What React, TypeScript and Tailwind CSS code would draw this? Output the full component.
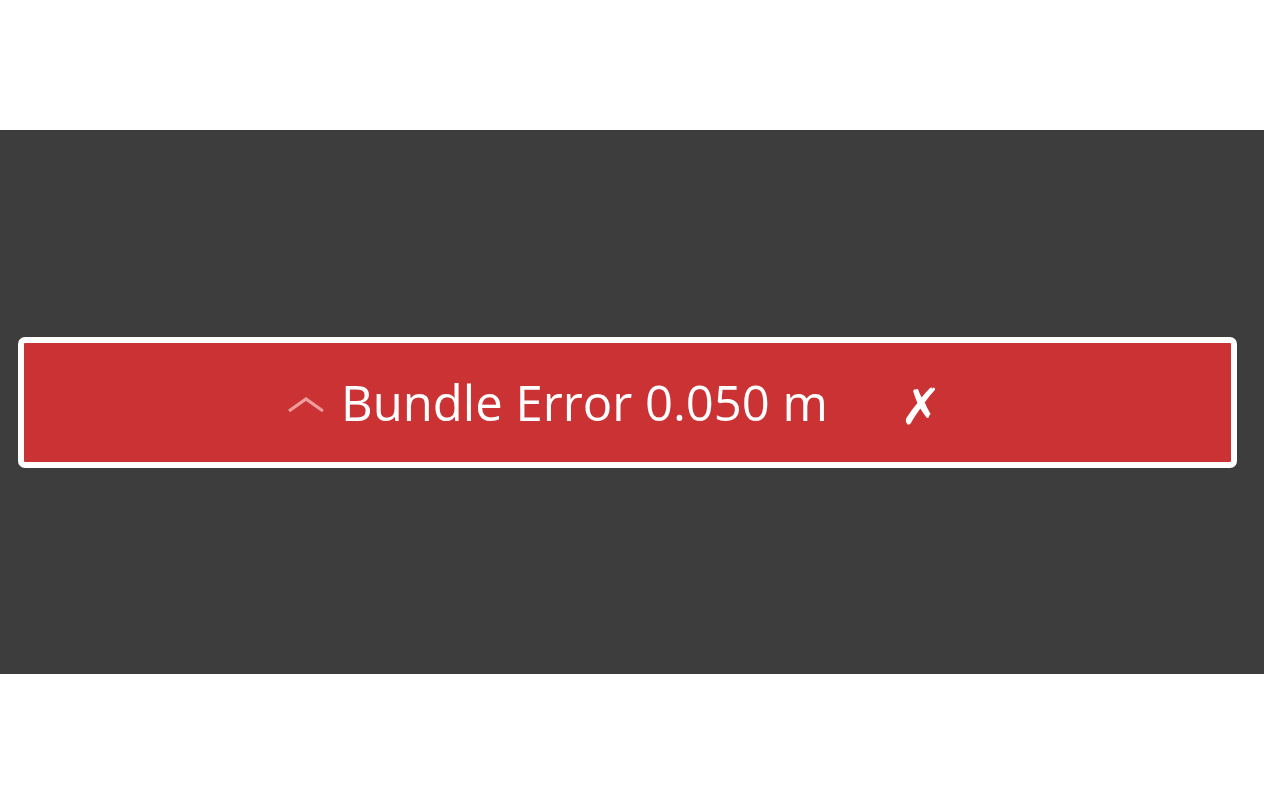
export default function App() {
  return (
    <div className="w-[1264px] h-[809px] bg-white flex flex-col">
      <div className="h-[130px] shrink-0" />
      <div className="h-[544px] shrink-0 bg-[#3d3d3d] flex items-center pl-[18px] pr-[27px]">
        <div className="w-full h-[131px] rounded-[7px] border-[6px] border-white bg-[#cb3233] flex items-center justify-center pr-[26px]">
          <svg width="38" height="17" viewBox="0 0 38 17" className="mt-[4px]" aria-hidden="true">
            <polyline
              points="2,15 19,3 36,15"
              fill="none"
              stroke="#ee9c9c"
              strokeWidth="3.2"
              strokeLinejoin="miter"
            />
          </svg>
          <span
            className="ml-[16px] text-white text-[49px] leading-none"
            style={{ fontFamily: '"Open Sans", "Noto Sans", sans-serif' }}
          >
            Bundle Error 0.050 m
          </span>
          <span
            className="ml-[72px] mt-[10px] text-white text-[50px] leading-none font-bold"
            style={{ fontFamily: '"DejaVu Sans", sans-serif' }}
          >
            ✗
          </span>
        </div>
      </div>
    </div>
  );
}
